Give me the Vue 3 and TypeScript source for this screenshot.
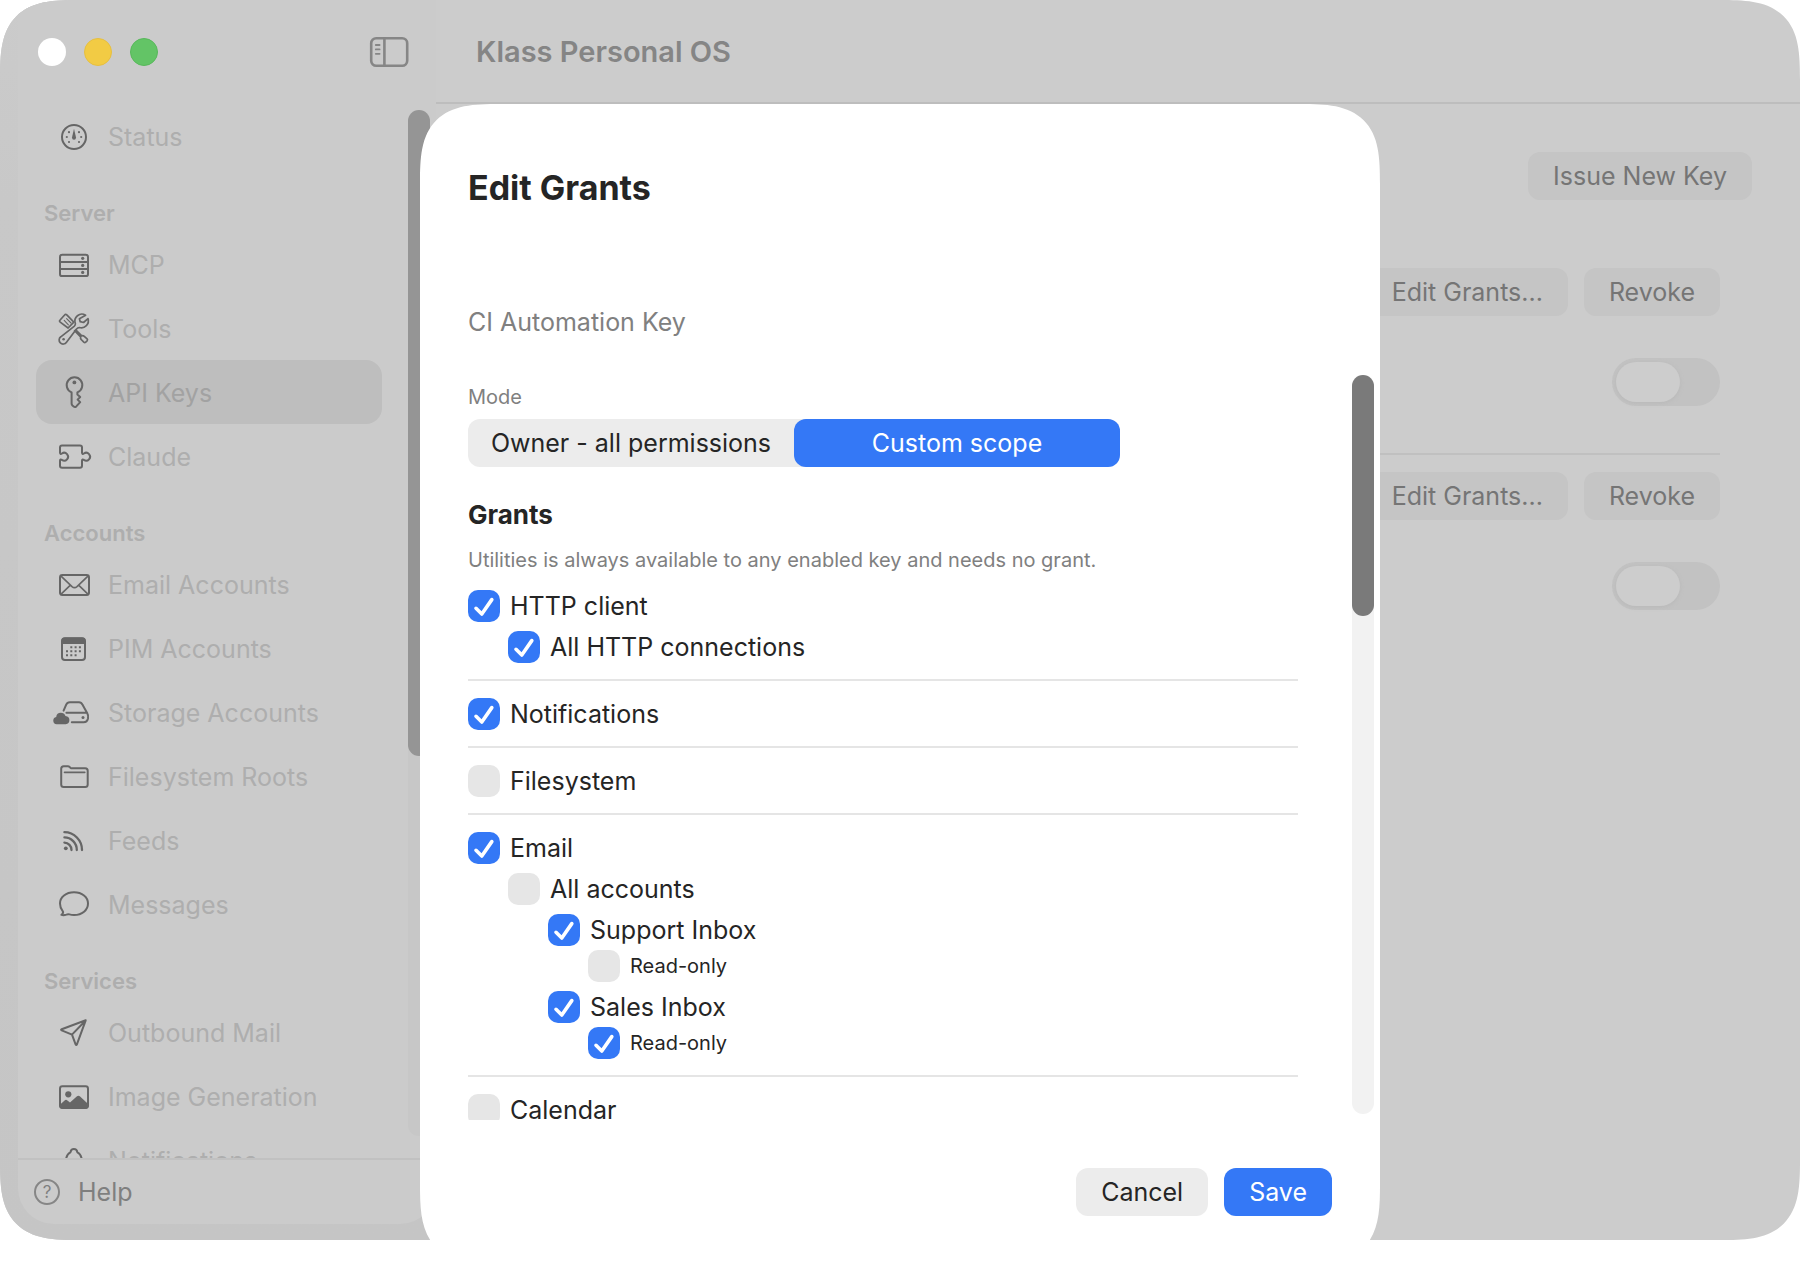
<script setup lang="ts">
import { reactive, ref } from 'vue'

type IconName =
  | 'status' | 'mcp' | 'tools' | 'keys' | 'claude' | 'email' | 'calendar' | 'storage'
  | 'folder' | 'feeds' | 'messages' | 'send' | 'image' | 'bell'

interface NavItem { label: string; icon: IconName }
interface NavGroup { title?: string; items: NavItem[] }
interface Grant { label: string; level: number; checked: boolean; small?: boolean }

const groups: NavGroup[] = [
  { items: [{ label: 'Status', icon: 'status' }] },
  {
    title: 'Server',
    items: [
      { label: 'MCP', icon: 'mcp' },
      { label: 'Tools', icon: 'tools' },
      { label: 'API Keys', icon: 'keys' },
      { label: 'Claude', icon: 'claude' },
    ],
  },
  {
    title: 'Accounts',
    items: [
      { label: 'Email Accounts', icon: 'email' },
      { label: 'PIM Accounts', icon: 'calendar' },
      { label: 'Storage Accounts', icon: 'storage' },
      { label: 'Filesystem Roots', icon: 'folder' },
      { label: 'Feeds', icon: 'feeds' },
      { label: 'Messages', icon: 'messages' },
    ],
  },
  {
    title: 'Services',
    items: [
      { label: 'Outbound Mail', icon: 'send' },
      { label: 'Image Generation', icon: 'image' },
      { label: 'Notifications', icon: 'bell' },
    ],
  },
]

const active = ref('API Keys')
const mode = ref<'owner' | 'custom'>('custom')
const keys = reactive([{ enabled: false }, { enabled: false }])

const sections = reactive<Grant[][]>([
  [
    { label: 'HTTP client', level: 0, checked: true },
    { label: 'All HTTP connections', level: 1, checked: true },
  ],
  [{ label: 'Notifications', level: 0, checked: true }],
  [{ label: 'Filesystem', level: 0, checked: false }],
  [
    { label: 'Email', level: 0, checked: true },
    { label: 'All accounts', level: 1, checked: false },
    { label: 'Support Inbox', level: 2, checked: true },
    { label: 'Read-only', level: 3, checked: false, small: true },
    { label: 'Sales Inbox', level: 2, checked: true },
    { label: 'Read-only', level: 3, checked: true, small: true },
  ],
  [{ label: 'Calendar', level: 0, checked: false }],
])
</script>

<template>
  <div class="window">
    <aside class="sidebar">
      <div class="panel">
        <div class="titlebar">
          <button class="light close" aria-label="Close"></button>
          <button class="light minimise" aria-label="Minimise"></button>
          <button class="light zoom" aria-label="Zoom"></button>
          <button class="toggle-sidebar" aria-label="Toggle sidebar">
            <svg width="40" height="32" viewBox="0 0 40 32" fill="none" stroke="#868686" stroke-width="2.6" stroke-linecap="round">
              <rect x="2.2" y="2.2" width="36" height="27.6" rx="5" />
              <path d="M15.400 2.500V29.500" />
              <path d="M6.800 9h3.800M6.800 13.400h3.800M6.800 17.800h3.800" stroke-width="1.800" />
            </svg>
          </button>
        </div>

        <nav class="nav">
          <section v-for="(group, g) in groups" :key="g">
            <h2 v-if="group.title" class="group-title">{{ group.title }}</h2>
            <a
              v-for="item in group.items"
              :key="item.label"
              href="#"
              class="nav-item"
              :class="{ active: item.label === active }"
              @click.prevent="active = item.label"
            >
              <svg class="icon" viewBox="0 1 40 36" aria-hidden="true">
                <g v-if="item.icon === 'status'">
                  <circle cx="20" cy="19" r="12" />
                  <path class="solid" d="M20 10.8 18 19.6a2 2.2 0 1 0 4 0z" />
                  <g class="solid">
                    <circle cx="12.8" cy="19" r="1.1" /><circle cx="27.2" cy="19" r="1.1" />
                    <circle cx="15" cy="14.2" r="1.1" /><circle cx="25" cy="14.2" r="1.1" />
                    <circle cx="15" cy="24" r="1.1" /><circle cx="25" cy="24" r="1.1" />
                  </g>
                </g>
                <g v-else-if="item.icon === 'mcp'">
                  <rect x="6" y="8.7" width="28" height="21.4" rx="2.2" />
                  <path d="M6 15.9h28M6 22.9h28" />
                  <g class="solid"><circle cx="28.7" cy="12.3" r="1.6" /><circle cx="28.7" cy="19.4" r="1.6" /><circle cx="28.7" cy="26.4" r="1.6" /></g>
                </g>
                <g v-else-if="item.icon === 'tools'" stroke-width="1.7">
                  <path d="M5.9 10.3 10.6 5q1-1.2 2.2-.1l7 7.2-5.7 5.9-7.9-5.9q-1.2-.9-.3-1.8z" />
                  <path d="M10.2 10.4l4.2 4.4M12.6 8.6l4.4 4.4" stroke-width="1.1" />
                  <path d="M20.6 20.6l6 6.3q-.4 1.7.6 2.6l2.6 2.7q1 .8 1.9 0l1.4-1.4q.9-1 0-1.9l-2.8-2.6q-1-.8-2.5-.5l-5.8-5.6" />
                  <path d="M31.6 5.2a7 7 0 0 0-10.2 8.5q-.1 1.6-1.3 2.7L6.8 26.8a4 4 0 1 0 5.7 5.4l10-13.2q1.2-1.3 2.8-1.5a7 7 0 0 0 8.7-8.9l-4.5 3.9-3.3-.8-.8-3z" />
                  <circle class="solid" cx="9.6" cy="29.3" r="1.3" />
                </g>
                <g v-else-if="item.icon === 'keys'">
                  <path d="M17.6 18.4a7.8 7.8 0 1 1 5.8 0v2.1l2.8 2.5-2.6 2.6 2.6 2.5-3.9 4.3q-1.4 1.2-2.6.1l-1.300-1.100q-.8-.7-.8-1.800z" />
                  <circle class="solid" cx="20.4" cy="8.4" r="1.9" />
                </g>
                <g v-else-if="item.icon === 'claude'">
                  <path d="M6 14.6V9.4a2 2 0 0 1 2-2H26a2 2 0 0 1 2 2v5.200c0 1.700 1 1.600 1.900.9a3.900 3.900 0 1 1 0 6.400c-.9-.7-1.900-.8-1.900.9v5a2 2 0 0 1-2 2H8a2 2 0 0 1-2-2v-5c0-1.700 1-1.600 1.900-.9a3.900 3.900 0 1 0 0-6.400c-.9.7-1.900.8-1.900-.9z" />
                </g>
                <g v-else-if="item.icon === 'email'">
                  <rect x="6" y="9" width="29" height="20" rx="2.4" />
                  <path d="M6.8 9.8 18 20.6q2.5 2.2 5 0L34.2 9.8M6.8 28.4l9.6-9.3M34.2 28.4l-9.6-9.3" stroke-width="1.6" />
                </g>
                <g v-else-if="item.icon === 'calendar'">
                  <rect x="8" y="8.3" width="23" height="21.6" rx="3" />
                  <path class="solid" d="M7.4 14V11q0-3.6 3.6-3.6h17q3.6 0 3.6 3.6v3z" />
                  <path class="solid" d="M16.300 16.200h2v2h-2zM20.600 16.200h2v2h-2zM24.900 16.200h2v2h-2zM12 20.200h2v2h-2zM16.300 20.200h2v2h-2zM20.600 20.200h2v2h-2zM24.900 20.200h2v2h-2zM12 24.200h2v2h-2zM16.300 24.200h2v2h-2zM20.600 24.200h2v2h-2z" />
                </g>
                <g v-else-if="item.icon === 'storage'">
                  <path d="M9.6 16.6 12.2 10.6q1-2.4 3.6-2.4H25q2.4 0 3.4 2.4l5 9q1.2 1.8.6 4.8-.9 3.8-4.4 3.8H17.8M12.4 18.7H32.8" />
                  <path class="solid" d="M2.6 30.2a3.7 3.7 0 0 1-.4-7.3q.5-4.2 4.6-4.2 3.4 0 4.7 3.2 3.9.4 3.9 4.2 0 4.1-3.7 4.1z" />
                  <circle class="solid" cx="29" cy="23.4" r="1.5" />
                </g>
                <g v-else-if="item.icon === 'folder'">
                  <path d="M7.2 26.4V10.8q0-2.5 2.5-2.5h4.1q1.2 0 2 .8l.6.6q.7.6 1.8.6H31.2q2.5 0 2.5 2.5v13.6q0 2.5-2.5 2.5H9.7q-2.5 0-2.5-2.5z" />
                  <path d="M10.5 14.4H30.8" stroke-width="1.6" />
                </g>
                <g v-else-if="item.icon === 'feeds'" stroke-width="2.3">
                  <path d="M10.4 10.2A17.7 17.7 0 0 1 28 28M10.4 15.4A12.5 12.5 0 0 1 22.8 28M10.4 20.6A7.3 7.3 0 0 1 17.5 28" />
                  <circle class="solid" cx="11.8" cy="26.3" r="1.9" />
                </g>
                <g v-else-if="item.icon === 'messages'">
                  <path d="M7.4 28.9q2.4-1.6 1.4-3.6Q6 22 6 17.4C6 11 12 6.3 20 6.3s14 4.7 14 11.2S28.2 29 20 29q-2.5 0-4.6-.6-1.5-.4-3 .2-2.5.9-5 .3z" />
                </g>
                <g v-else-if="item.icon === 'send'">
                  <path d="M31.7 6.3 7.7 15.2q-1.3.6 0 1.2L18 20.6l3.6 9.7q.7 1.5 1.3 0zM31.4 6.7 18.2 20.4" />
                </g>
                <g v-else-if="item.icon === 'image'">
                  <rect x="6" y="8.3" width="28" height="21.7" rx="2.4" />
                  <circle class="solid" cx="14.3" cy="16.3" r="3.1" />
                  <path class="solid" d="M5.6 27l5-4.6q1.4-1.2 2.8 0l2.6 2.2 6.7-6.2q1.7-1.5 3.4 0l8.3 7.8v1.8q0 2.7-2.7 2.7H8.3q-2.7 0-2.7-2.7z" />
                </g>
                <g v-else>
                  <path d="M11.8 20q.2-7.6 4.6-9.6.6-3.3 3.5-3.3t3.5 3.3q4.4 2 4.6 9.6L30 26H9.8z" />
                </g>
              </svg>
              <span>{{ item.label }}</span>
            </a>
          </section>
        </nav>

        <a class="help" href="#" @click.prevent>
          <span class="help-icon" aria-hidden="true">?</span>
          <span>Help</span>
        </a>
      </div>
      <div class="side-track" aria-hidden="true"><div class="side-thumb"></div></div>
    </aside>

    <main class="main">
      <header class="header"><h1>Klass Personal OS</h1></header>
      <div class="content">
        <button class="btn muted issue">Issue New Key</button>
        <ul class="keys">
          <li v-for="(key, i) in keys" :key="i" class="key">
            <div class="key-actions">
              <button class="btn muted">Edit Grants...</button>
              <button class="btn muted">Revoke</button>
            </div>
            <input v-model="key.enabled" type="checkbox" role="switch" class="switch" aria-label="Key enabled" />
          </li>
        </ul>
      </div>
    </main>

    <div class="overlay">
      <form class="dialog" role="dialog" aria-labelledby="dialog-title" @submit.prevent>
        <h2 id="dialog-title">Edit Grants</h2>
        <p class="key-name">CI Automation Key</p>

        <div class="scroll">
          <div class="scroll-content">
            <fieldset class="mode">
              <legend>Mode</legend>
              <div class="segments">
                <label :class="{ selected: mode === 'owner' }">
                  <input v-model="mode" type="radio" name="mode" value="owner" />Owner - all permissions
                </label>
                <label :class="{ selected: mode === 'custom' }">
                  <input v-model="mode" type="radio" name="mode" value="custom" />Custom scope
                </label>
              </div>
            </fieldset>

            <h3>Grants</h3>
            <p class="hint">Utilities is always available to any enabled key and needs no grant.</p>

            <div v-for="(section, s) in sections" :key="s" class="grants">
              <label
                v-for="(grant, i) in section"
                :key="i"
                class="grant"
                :class="['level-' + grant.level, { small: grant.small }]"
              >
                <span class="box">
                  <input v-model="grant.checked" type="checkbox" />
                  <svg v-if="grant.checked" viewBox="0 0 32 32" aria-hidden="true">
                    <path d="M8 18.3 13.8 24 23.8 9.6" />
                  </svg>
                </span>
                {{ grant.label }}
              </label>
            </div>
          </div>
          <div class="track" aria-hidden="true"><div class="thumb"></div></div>
        </div>

        <div class="actions">
          <button type="button" class="btn light-btn">Cancel</button>
          <button type="submit" class="btn primary">Save</button>
        </div>
      </form>
    </div>
  </div>
</template>

<style>
body {
  margin: 0;
  background: #fff;
}
</style>

<style scoped>
* {
  box-sizing: border-box;
}

.window {
  position: relative;
  display: flex;
  height: calc(100vh - 24px);
  overflow: hidden;
  border-radius: 56px;
  background: #cccccc;
  color: #252525;
  font: 400 25px/32px Inter, "Noto Sans", sans-serif;
}

h1, h2, h3, p, ul {
  margin: 0;
  padding: 0;
}

button {
  border: 0;
  padding: 0;
  font: inherit;
  color: inherit;
}

/* Sidebar */
.sidebar {
  position: relative;
  flex: none;
  width: 436px;
  padding: 0 0 16px 18px;
  background: linear-gradient(#cbcbcb 0, #c8c8c8 200px, #c5c5c5);
}

.panel {
  display: flex;
  flex-direction: column;
  height: 100%;
  border-radius: 0 0 36px 36px;
  background: #cbcbcb;
}

.titlebar {
  display: flex;
  flex: none;
  align-items: center;
  gap: 18px;
  height: 104px;
  padding: 0 27px 0 20px;
}

.light {
  width: 28px;
  height: 28px;
  border-radius: 50%;
}

.close { background: #fff; }
.minimise { background: #f2cb44; border: 1px solid #e6bf40; }
.zoom { background: #63c466; border: 1px solid #58b85b; }

.toggle-sidebar {
  height: 32px;
  margin-left: auto;
  background: none;
}

.toggle-sidebar svg {
  display: block;
}

.nav {
  flex: 1;
  min-height: 0;
  overflow: hidden;
  padding: 0 54px 0 18px;
}

.group-title {
  height: 64px;
  padding: 29px 0 0 8px;
  color: #aeaeae;
  font-size: 22px;
  line-height: 32px;
  font-weight: 600;
}

.nav-item {
  display: flex;
  align-items: center;
  gap: 14px;
  height: 64px;
  padding: 2px 18px 0;
  border-radius: 16px;
  color: #aeaeae;
  text-decoration: none;
  white-space: nowrap;
}

.nav-item.active {
  background: #bebebe;
  color: #a2a2a2;
}

.icon {
  flex: none;
  width: 40px;
  height: 36px;
  overflow: visible;
  fill: none;
  stroke: #666;
  stroke-width: 2;
  stroke-linejoin: round;
  stroke-linecap: round;
}

.icon .solid {
  fill: #666;
  stroke: none;
}

.help {
  display: flex;
  flex: none;
  align-items: center;
  gap: 18px;
  height: 66px;
  padding-left: 16px;
  border-top: 2px solid #c1c1c1;
  color: #7f7f7f;
  text-decoration: none;
}

.help-icon {
  width: 26px;
  height: 26px;
  border: 2px solid #868686;
  border-radius: 50%;
  font-size: 17px;
  line-height: 22px;
  text-align: center;
}

.side-track {
  position: absolute;
  top: 110px;
  right: 6px;
  bottom: 104px;
  width: 22px;
  border-radius: 11px;
  background: #c7c7c7;
}

.side-thumb {
  height: 63%;
  border-radius: 11px;
  background: #959595;
}

/* Main area */
.main {
  flex: 1;
  min-width: 0;
}

.header {
  height: 104px;
  padding: 2px 40px 0;
  border-bottom: 2px solid #bdbdbd;
  color: #858585;
}

.header h1 {
  font-size: 29px;
  line-height: 100px;
  font-weight: 600;
}

.content {
  display: flex;
  flex-direction: column;
  padding: 48px 48px 0;
}

.btn {
  height: 48px;
  padding: 0 25px;
  border-radius: 12px;
}

.muted {
  background: #c5c5c5;
  color: #757575;
}

.issue {
  align-self: flex-end;
}

.keys {
  padding: 51px 32px 0;
  list-style: none;
}

.key {
  display: flex;
  flex-direction: column;
  align-items: flex-end;
  gap: 42px;
  padding: 17px 0 47px;
}

.key + .key {
  border-top: 2px solid #c0c0c0;
}

.key-actions {
  display: flex;
  gap: 16px;
}

.switch {
  appearance: none;
  width: 108px;
  height: 48px;
  margin: 0;
  padding: 4px;
  border-radius: 24px;
  background: #c2c2c2;
}

.switch::before {
  content: "";
  display: block;
  width: 64px;
  height: 40px;
  border-radius: 20px;
  background: #cdcdcd;
  box-shadow: 0 1px 4px #b8b8b8;
}

.switch:checked::before {
  margin-left: auto;
}

/* Dialog */
.overlay {
  position: absolute;
  inset: 104px 0 -24px;
  display: flex;
  justify-content: center;
  pointer-events: none;
}

.dialog {
  display: flex;
  flex-direction: column;
  width: 960px;
  max-width: 100%;
  padding: 64px 0 48px 48px;
  border-radius: 56px;
  background: #fff;
  pointer-events: auto;
}

/* Continuous corners where the engine can draw them */
@supports (corner-shape: superellipse(1.6)) {
  .window,
  .dialog {
    border-radius: 80px;
    corner-shape: superellipse(1.6);
  }
}

.dialog h2 {
  font-size: 34px;
  line-height: 40px;
  font-weight: 700;
}

.key-name {
  margin-top: 98px;
  color: #808080;
}

.scroll {
  display: flex;
  flex: 1;
  min-height: 0;
  margin: 29px 6px 48px 0;
}

.scroll-content {
  flex: 1;
  overflow: hidden;
  padding-top: 16px;
}

.track {
  flex: none;
  width: 22px;
  margin: 8px 0 6px 54px;
  border-radius: 11px;
  background: #f2f2f2;
}

.thumb {
  height: 241px;
  border-radius: 11px;
  background: #7a7a7a;
}

.mode {
  margin: 0;
  padding: 0;
  border: 0;
}

.mode legend {
  padding: 0 0 8px;
  color: #808080;
  font-size: 20px;
  line-height: 28px;
}

.segments {
  display: grid;
  grid-template-columns: 1fr 1fr;
  width: 652px;
  max-width: 100%;
  border-radius: 12px;
  background: #ececec;
}

.segments label {
  padding: 8px 20px;
  border-radius: 12px;
  text-align: center;
  white-space: nowrap;
}

.segments label.selected {
  background: #3478f6;
  color: #fff;
}

.segments input {
  position: absolute;
  opacity: 0;
  pointer-events: none;
}

.dialog h3 {
  margin-top: 32px;
  font-size: 26px;
  line-height: 32px;
  font-weight: 700;
}

.hint {
  margin: 15px 0 16px;
  color: #808080;
  font-size: 20px;
  line-height: 28px;
}

.grants + .grants {
  margin-top: 16px;
  padding-top: 17px;
  border-top: 2px solid #e5e5e5;
}

.grant {
  display: flex;
  align-items: center;
  gap: 10px;
}

.grant + .grant {
  margin-top: 9px;
}

.grant + .grant.small {
  margin-top: 4px;
  font-size: 20px;
}

.level-1 { margin-left: 40px; }
.level-2 { margin-left: 80px; }
.level-3 { margin-left: 120px; }

.box {
  display: grid;
  width: 32px;
  height: 32px;
}

.box > * {
  grid-area: 1 / 1;
}

.box input {
  appearance: none;
  width: 32px;
  height: 32px;
  margin: 0;
  border-radius: 10px;
  background: #e6e6e6;
}

.box input:checked {
  background: #3478f6;
}

.box svg {
  fill: none;
  stroke: #fff;
  stroke-width: 3.6;
  stroke-linecap: round;
  stroke-linejoin: round;
  pointer-events: none;
}

.actions {
  display: flex;
  justify-content: flex-end;
  gap: 16px;
  padding-right: 48px;
}

.light-btn { background: #ececec; }

.primary {
  background: #3478f6;
  color: #fff;
}
</style>
